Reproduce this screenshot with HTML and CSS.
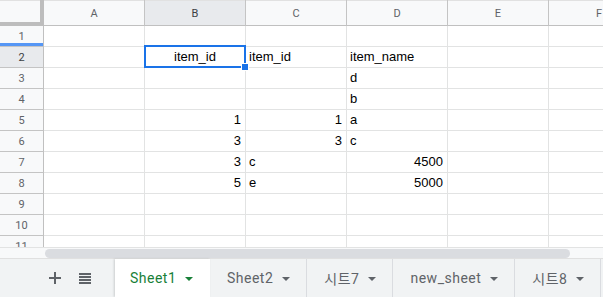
FILE: index.html
```html
<!DOCTYPE html>
<html lang="ko">
<head>
    <meta charset="UTF-8">
    <meta name="viewport" content="width=device-width, initial-scale=1.0">
    <title>Sheet1</title>
    <link rel="stylesheet" href="styles.css">
</head>
<body>
  <div class="sheet">
    <div class="grid">
      <!-- column headers -->
      <div class="corner"></div>
      <div class="col-head">A</div>
      <div class="col-head active">B</div>
      <div class="col-head">C</div>
      <div class="col-head">D</div>
      <div class="col-head">E</div>
      <div class="col-head">F</div>

      <div class="row-head frozen">1</div>
      <div class="cell"></div><div class="cell"></div><div class="cell"></div><div class="cell"></div><div class="cell"></div><div class="cell"></div>

      <div class="row-head active">2</div>
      <div class="cell"></div>
      <div class="cell center selected">item_id</div>
      <div class="cell">item_id</div>
      <div class="cell">item_name</div>
      <div class="cell"></div><div class="cell"></div>

      <div class="row-head">3</div>
      <div class="cell"></div><div class="cell"></div><div class="cell"></div>
      <div class="cell">d</div>
      <div class="cell"></div><div class="cell"></div>

      <div class="row-head">4</div>
      <div class="cell"></div><div class="cell"></div><div class="cell"></div>
      <div class="cell">b</div>
      <div class="cell"></div><div class="cell"></div>

      <div class="row-head">5</div>
      <div class="cell"></div>
      <div class="cell num">1</div>
      <div class="cell num">1</div>
      <div class="cell">a</div>
      <div class="cell"></div><div class="cell"></div>

      <div class="row-head">6</div>
      <div class="cell"></div>
      <div class="cell num">3</div>
      <div class="cell num">3</div>
      <div class="cell">c</div>
      <div class="cell"></div><div class="cell"></div>

      <div class="row-head">7</div>
      <div class="cell"></div>
      <div class="cell num">3</div>
      <div class="cell">c</div>
      <div class="cell num">4500</div>
      <div class="cell"></div><div class="cell"></div>

      <div class="row-head">8</div>
      <div class="cell"></div>
      <div class="cell num">5</div>
      <div class="cell">e</div>
      <div class="cell num">5000</div>
      <div class="cell"></div><div class="cell"></div>

      <div class="row-head">9</div>
      <div class="cell"></div><div class="cell"></div><div class="cell"></div><div class="cell"></div><div class="cell"></div><div class="cell"></div>

      <div class="row-head">10</div>
      <div class="cell"></div><div class="cell"></div><div class="cell"></div><div class="cell"></div><div class="cell"></div><div class="cell"></div>

      <div class="row-head">11</div>
      <div class="cell"></div><div class="cell"></div><div class="cell"></div><div class="cell"></div><div class="cell"></div><div class="cell"></div>
    </div>
  </div>

  <div class="hscroll"><div class="thumb"></div></div>

  <div class="tabbar">
    <div class="tab-tools">
      <svg class="tool-icon" width="12" height="12" viewBox="0 0 12 12">
        <path d="M5 0h2v5h5v2H7v5H5V7H0V5h5z" fill="#5f6368"/>
      </svg>
      <svg class="tool-icon" width="12" height="11" viewBox="0 0 12 11">
        <path d="M0 0h12v2H0zM0 3h12v2H0zM0 6h12v2H0zM0 9h12v2H0z" fill="#5f6368"/>
      </svg>
    </div>
    <div class="tab current">Sheet1<span class="caret"></span></div>
    <div class="tab">Sheet2<span class="caret"></span></div>
    <div class="tab">시트7<span class="caret"></span></div>
    <div class="tab">new_sheet<span class="caret"></span></div>
    <div class="tab">시트8<span class="caret"></span></div>
  </div>
</body>
</html>
```

FILE: styles.css
```css
html, body {
  margin: 0;
  padding: 0;
  width: 603px;
  height: 297px;
  overflow: hidden;
  background: #fff;
}
body {
  display: flex;
  flex-direction: column;
  font-family: "Liberation Sans", Arial, sans-serif;
}
.sheet {
  height: 247px;
  overflow: hidden;
  flex: none;
}
.grid {
  display: grid;
  grid-template-columns: 44px repeat(6, 101px);
  grid-template-rows: 26px;
  grid-auto-rows: 21px;
  width: 650px;
}
.grid > div {
  box-sizing: border-box;
  border-right: 1px solid #e2e3e3;
  border-bottom: 1px solid #e2e3e3;
}
.corner {
  background: #f8f9fa;
  border-right: 4px solid #bdbdbd !important;
  border-bottom: 4px solid #bdbdbd !important;
  box-shadow: inset 0 1px 0 #e1e1e1;
}
.col-head {
  background: #f8f9fa;
  border-bottom-color: #c0c0c0 !important;
  border-right-color: #c4c4c4 !important;
  box-shadow: inset 0 1px 0 #e1e1e1;
  font-family: Roboto, "Liberation Sans", sans-serif;
  font-size: 11px;
  color: #5f6368;
  display: flex;
  align-items: center;
  justify-content: center;
  padding-top: 1px;
}
.row-head {
  background: #f8f9fa;
  border-right-color: #c0c0c0 !important;
  border-bottom-color: #c4c4c4 !important;
  font-family: Roboto, "Liberation Sans", sans-serif;
  font-size: 11px;
  color: #5f6368;
  display: flex;
  align-items: center;
  justify-content: center;
  overflow: hidden;
}
.col-head.active, .row-head.active {
  background: #e8eaed;
  color: #3c4043;
}
.row-head.frozen {
  box-shadow: inset 0 -3px 0 #5596f5;
}
.cell {
  font-size: 13px;
  line-height: 20px;
  color: #000;
  padding: 0 3px;
  white-space: nowrap;
  overflow: hidden;
}
.cell.num {
  text-align: right;
  padding-right: 4px;
}
.cell.center {
  text-align: center;
}
.cell.selected {
  position: relative;
  overflow: visible;
}
.cell.selected::before {
  content: "";
  position: absolute;
  left: -1px;
  top: -2px;
  right: -1px;
  bottom: -1px;
  border: 2px solid #1a73e8;
}
.cell.selected::after {
  content: "";
  position: absolute;
  right: -4px;
  bottom: -4px;
  width: 6px;
  height: 6px;
  background: #1a73e8;
  border: 1px solid #fff;
  z-index: 2;
}
.hscroll {
  height: 11px;
  flex: none;
  background: #f8f9fa;
  border-top: 1px solid #e2e3e3;
  box-sizing: border-box;
  padding: 1px 0 0 45px;
}
.thumb {
  width: 525px;
  height: 9px;
  background: #dadce0;
  border-radius: 5px;
}
.tabbar {
  flex: 1;
  display: flex;
  background: #f1f3f4;
  border-top: 1px solid #e0e0e0;
  font-family: Roboto, "Noto Sans CJK KR", sans-serif;
  font-size: 14px;
  font-weight: 400;
  letter-spacing: 0.5px;
  color: #5f6368;
}
.tab-tools {
  width: 115px;
  box-sizing: border-box;
  padding-left: 49px;
  display: flex;
  align-items: center;
  gap: 18px;
}
.tab {
  display: flex;
  align-items: center;
  padding: 0 16px 0 17px;
  gap: 9px;
  border-right: 1px solid #dadce0;
  white-space: nowrap;
}
.tab.current {
  background: #fff;
  color: #188038;
  width: 95px;
  box-sizing: border-box;
  padding-left: 15px;
  box-shadow: -1px 0 2px rgba(60, 64, 67, 0.2);
  border-right: none;
}
.caret {
  width: 0;
  height: 0;
  border-left: 4px solid transparent;
  border-right: 4px solid transparent;
  border-top: 4px solid #5f6368;
  margin-top: 1px;
}
.tab.current .caret {
  border-top-color: #188038;
}
```
